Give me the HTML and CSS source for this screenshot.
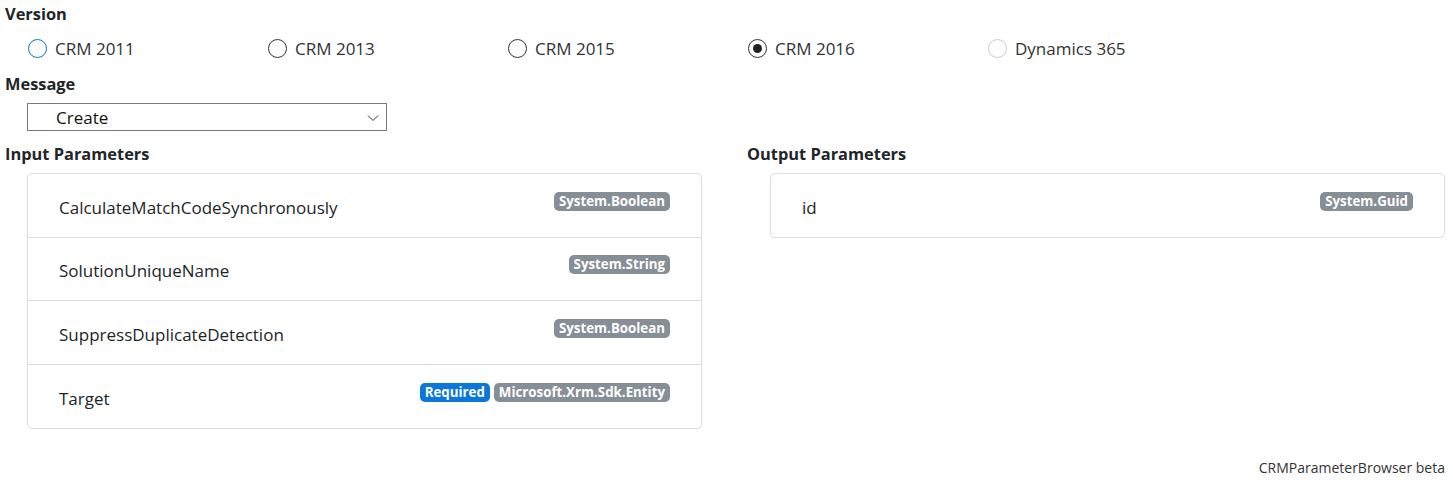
FILE: index.html
```html
<!DOCTYPE html>
<html>
<head>
<meta charset="utf-8">
<link rel="stylesheet" href="styles.css">
</head>
<body>
<div class="page">
  <div class="field-label">Version</div>
  <div class="radios">
    <label class="radio"><span class="circle focus"></span><span>CRM 2011</span></label>
    <label class="radio"><span class="circle"></span><span>CRM 2013</span></label>
    <label class="radio"><span class="circle"></span><span>CRM 2015</span></label>
    <label class="radio"><span class="circle checked"></span><span>CRM 2016</span></label>
    <label class="radio"><span class="circle disabled"></span><span>Dynamics 365</span></label>
  </div>
  <div class="field-label msg">Message</div>
  <div class="select">
    <span>Create</span>
    <svg class="chev" width="12" height="8" viewBox="0 0 12 8"><path d="M1 1.5 L6 6.5 L11 1.5" fill="none" stroke="#333" stroke-width="1"/></svg>
  </div>
  <div class="params">
    <div class="col left">
      <div class="field-label">Input Parameters</div>
      <div class="card">
        <div class="row"><span>CalculateMatchCodeSynchronously</span><span class="badges"><span class="badge">System.Boolean</span></span></div>
        <div class="row"><span>SolutionUniqueName</span><span class="badges"><span class="badge">System.String</span></span></div>
        <div class="row tall"><span>SuppressDuplicateDetection</span><span class="badges"><span class="badge">System.Boolean</span></span></div>
        <div class="row tall"><span>Target</span><span class="badges"><span class="badge req">Required</span><span class="badge">Microsoft.Xrm.Sdk.Entity</span></span></div>
      </div>
    </div>
    <div class="col right">
      <div class="field-label">Output Parameters</div>
      <div class="card">
        <div class="row single"><span>id</span><span class="badges"><span class="badge">System.Guid</span></span></div>
      </div>
    </div>
  </div>
  <div class="footer">CRMParameterBrowser beta</div>
</div>
</body>
</html>
```
FILE: styles.css
```css
html, body {
  margin: 0;
  padding: 0;
  background: #fff;
}
body {
  font-family: "Open Sans", "Noto Sans", sans-serif;
  color: #212529;
  font-size: 17px;
}
.page {
  padding: 0 8px 0 5px;
}
.field-label {
  font-weight: 700;
  font-size: 16.4px;
  line-height: 27px;
  color: #212529;
}
.radios {
  display: flex;
  padding-left: 23px;
  height: 43px;
  align-items: center;
}
.radio {
  width: 240px;
  display: flex;
  align-items: center;
  gap: 8px;
  color: #333;
}
.circle {
  width: 17px;
  height: 17px;
  border: 1px solid #333;
  border-radius: 50%;
  box-sizing: content-box;
  display: inline-flex;
  align-items: center;
  justify-content: center;
}
.circle.focus { border-color: #0078d7; }
.circle.disabled { border-color: #ccc; }
.circle.checked::after {
  content: "";
  width: 9px;
  height: 9px;
  border-radius: 50%;
  background: #222;
}
.select {
  position: relative;
  margin: 6px 0 0 22px;
  height: 26px;
  border: 1px solid #7a7a7a;
  display: flex;
  align-items: center;
  padding-left: 28px;
  box-sizing: content-box;
  width: 330px;
  color: #111;
}
.chev {
  position: absolute;
  right: 7px;
  top: 10px;
}
.params {
  display: flex;
  margin-top: 9px;
}
.col.left { width: 742px; }
.col.right { flex: 1; }
.card {
  margin: 6px 0 0 22px;
  width: 673px;
  border: 1px solid #dcdcdc;
  border-radius: 5px;
}
.col.right .card { margin-left: 23px; }
.row {
  height: 63px;
  box-sizing: border-box;
  display: flex;
  justify-content: space-between;
  align-items: center;
  padding: 3px 31px 0 31px;
  border-top: 1px solid #dcdcdc;
}
.row.tall { height: 64px; }
.row:first-child { border-top: none; height: 63px; }
.row.single { height: 63px; }
.badges {
  display: flex;
  gap: 4px;
  margin-bottom: 12px;
}
.badge {
  background: #868e96;
  color: #fff;
  font-weight: 700;
  font-size: 13.3px;
  line-height: 19px;
  padding: 0 5px;
  border-radius: 5px;
}
.badge.req { background: #0a77d9; }
.footer {
  text-align: right;
  font-size: 14px;
  margin-top: 29px;
  color: #333;
}
```
